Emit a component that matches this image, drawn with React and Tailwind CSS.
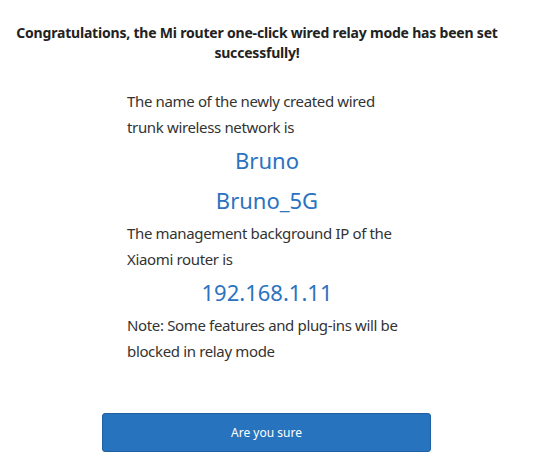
import React from 'react';

const App = () => {
  return (
    <div className="w-[544px] h-[473px] bg-white text-[#333] font-['Noto_Sans','Open_Sans',sans-serif]">
      <div className="pt-[23px] pl-[4px] pr-[34px]">
        <h2 className="text-center text-[14px] font-bold leading-[20px] tracking-[-0.2px] text-[#222]">
          Congratulations, the Mi router one-click wired relay mode has been set successfully!
        </h2>
      </div>

      <div className="mt-[25px] ml-[127px] w-[280px] text-[15px] leading-[26px] tracking-[-0.35px]">
        <p>The name of the newly created wired trunk wireless network is</p>
        <p className="text-center text-[22px] leading-[40px] tracking-normal text-[#2b73c0]">Bruno</p>
        <p className="text-center text-[22px] leading-[40px] tracking-normal text-[#2b73c0]">Bruno_5G</p>
        <p>The management background IP of the Xiaomi router is</p>
        <p className="text-center text-[22px] leading-[40px] tracking-normal text-[#2b73c0]">192.168.1.11</p>
        <p>Note: Some features and plug-ins will be blocked in relay mode</p>
      </div>

      <div className="mt-[49px] ml-[102px]">
        <button className="w-[329px] h-[39px] rounded-[3px] bg-[#2873bd] border border-[#1f5fa3] text-white text-[12px]">
          Are you sure
        </button>
      </div>
    </div>
  );
};

export default App;
